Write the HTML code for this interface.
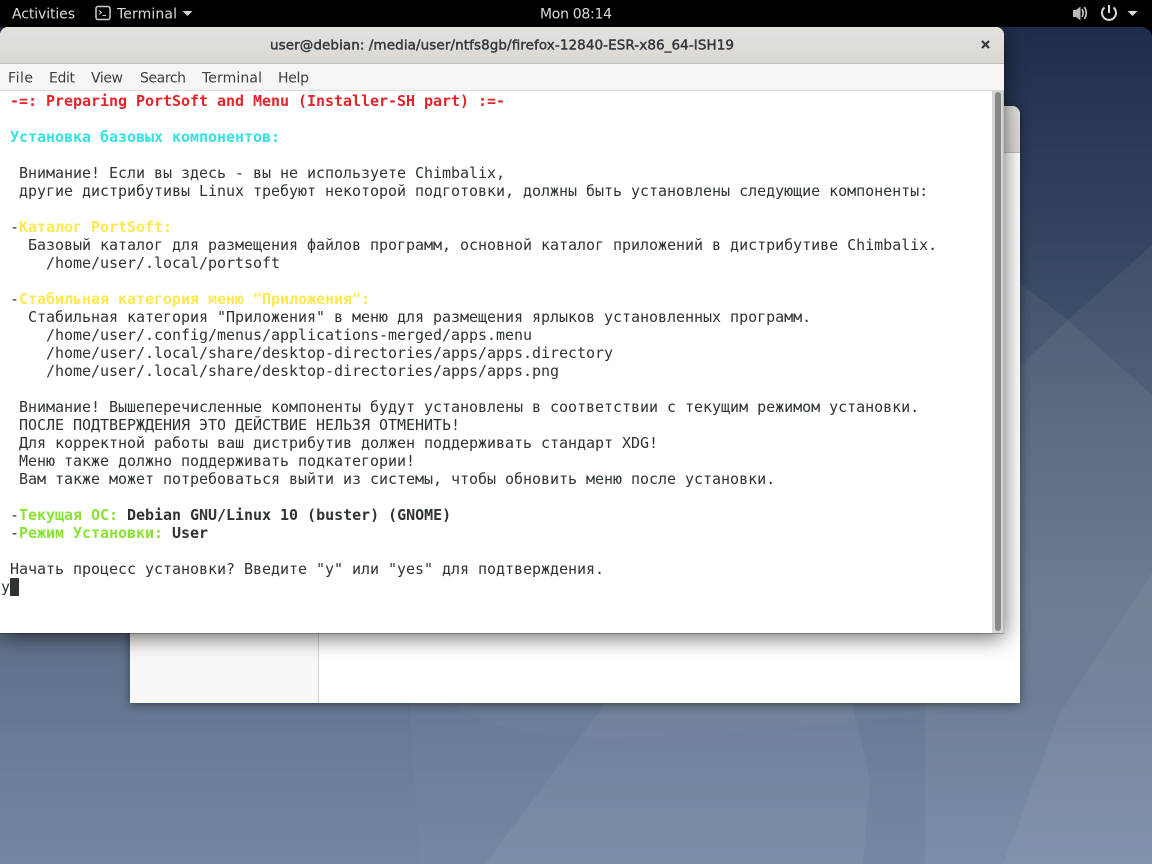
<!DOCTYPE html>
<html><head><meta charset="utf-8">
<style>
html,body{margin:0;padding:0;width:1152px;height:864px;overflow:hidden;background:#000}
#bg,#ui{position:absolute;left:0;top:0}
.win{position:absolute;box-sizing:border-box}
#back{left:130px;top:106px;width:890px;height:597px;background:#fff;border-radius:8px 8px 0 0;box-shadow:0 2px 10px rgba(0,0,0,.45);overflow:hidden}
#backhead{position:absolute;left:0;top:0;width:890px;height:46px;background:linear-gradient(#e4e2df,#dcd9d5);border-bottom:1px solid #bfbcb8}
#side{position:absolute;left:0;top:47px;width:188px;height:550px;background:#f8f8f6;border-right:1px solid #cfcfcb}
#term{left:0;top:27px;width:1004px;height:606px;border-radius:8px 8px 0 0;box-shadow:0 1px 0 rgba(0,0,0,.25),0 4px 22px rgba(0,0,0,.6);background:#f5f4f2;overflow:hidden}
#head{position:absolute;left:0;top:0;width:1004px;height:36px;background:linear-gradient(#e3e1de,#dbd8d4);border-bottom:1px solid #c2bfba}
#menu{position:absolute;left:0;top:37px;width:1004px;height:27px;background:#f6f5f3;border-bottom:1px solid #dcdad7;box-sizing:border-box}
#body{position:absolute;left:0;top:64px;width:992px;height:542px;background:#fff}
#track{position:absolute;left:992px;top:64px;width:12px;height:542px;background:#d6d6d4;box-sizing:border-box;border-right:1px solid #b8b8b6}
#thumb{position:absolute;left:995px;top:65px;width:6px;height:539px;background:#878787;border-radius:3px}
#txt{position:absolute;left:1px;top:92px;margin:0;font:15px/18px "DejaVu Sans Mono",monospace;color:#2e3436;white-space:pre;letter-spacing:-0.03px}
#txt b{font-weight:bold}
.r{color:#e3242b}.c{color:#34e2e2}.y{color:#fce94f}.g{color:#8ae234}.k{color:#2e3436}
#cur{position:absolute;left:10px;top:578px;width:9px;height:18px;background:#2e3436}
</style></head>
<body>
<svg id="bg" width="1152" height="864" viewBox="0 0 1152 864">
<defs>
<linearGradient id="g" x1="0" y1="0" x2="0" y2="1">
<stop offset="0" stop-color="#1d2a48"/><stop offset=".35" stop-color="#3b4c66"/><stop offset=".72" stop-color="#5f6f89"/><stop offset="1" stop-color="#7386a2"/>
</linearGradient>
<linearGradient id="fo" gradientUnits="userSpaceOnUse" x1="0" y1="600" x2="0" y2="703">
<stop offset="0" stop-color="#fff" stop-opacity=".055"/><stop offset="1" stop-color="#fff" stop-opacity="0"/>
</linearGradient>
<linearGradient id="fi" gradientUnits="userSpaceOnUse" x1="0" y1="600" x2="0" y2="703">
<stop offset="0" stop-color="#fff" stop-opacity="0"/><stop offset="1" stop-color="#fff" stop-opacity=".06"/>
</linearGradient>
</defs>
<rect width="1152" height="864" fill="url(#g)"/>
<path d="M1152 245L1068 320L1000 385L1000 703L1152 703Z" fill="url(#fo)"/>
<path d="M1000 268L1068 320L1152 395L1152 703L1000 703Z" fill="url(#fo)"/>
<path d="M925 703L1000 703L1000 600L1152 600L1152 864L925 864Z" fill="url(#fi)"/>
<path d="M1152 573L1060 713L1003 864L1152 864Z" fill="#fff" opacity=".05"/>
<path d="M409 703L420 864L925 864L925 703Z" fill="#fff" opacity=".02"/>
<path d="M606 703L485 864L863 864L870 780L852 703Z" fill="#fff" opacity=".05"/>
<path d="M452 703Q500 738 610 738Q760 735 955 710Q990 705 1018 703Z" fill="#fff" opacity=".025"/>
<rect x="0" y="0" width="1152" height="27" fill="#000"/>
<path d="M1140 27Q1152 27 1152 39L1152 27Z" fill="#000"/>
</svg>

<div class="win" id="back"><div id="backhead"></div><div id="side"></div></div>

<div class="win" id="term">
<div id="head"></div>
<div id="menu"></div>
<div id="body"></div>
<div id="track"></div>
<div id="thumb"></div>
</div>

<pre id="txt"><b class="r"> -=: Preparing PortSoft and Menu (Installer-SH part) :=-</b>

<b class="c"> Установка базовых компонентов:</b>

  Внимание! Если вы здесь - вы не используете Chimbalix,
  другие дистрибутивы Linux требуют некоторой подготовки, должны быть установлены следующие компоненты:

 -<b class="y">Каталог PortSoft:</b>
   Базовый каталог для размещения файлов программ, основной каталог приложений в дистрибутиве Chimbalix.
     /home/user/.local/portsoft

 -<b class="y">Стабильная категория меню "Приложения":</b>
   Стабильная категория "Приложения" в меню для размещения ярлыков установленных программ.
     /home/user/.config/menus/applications-merged/apps.menu
     /home/user/.local/share/desktop-directories/apps/apps.directory
     /home/user/.local/share/desktop-directories/apps/apps.png

  Внимание! Вышеперечисленные компоненты будут установлены в соответствии с текущим режимом установки.
  ПОСЛЕ ПОДТВЕРЖДЕНИЯ ЭТО ДЕЙСТВИЕ НЕЛЬЗЯ ОТМЕНИТЬ!
  Для корректной работы ваш дистрибутив должен поддерживать стандарт XDG!
  Меню также должно поддерживать подкатегории!
  Вам также может потребоваться выйти из системы, чтобы обновить меню после установки.

 -<b class="g">Текущая ОС:</b> <b>Debian GNU/Linux 10 (buster) (GNOME)</b>
 -<b class="g">Режим Установки:</b> <b>User</b>

 Начать процесс установки? Введите "y" или "yes" для подтверждения.
y</pre>
<div id="cur"></div>

<svg id="ui" width="1152" height="864" viewBox="0 0 1152 864" font-family="'DejaVu Sans',sans-serif">
<g fill="#dcdcda" font-size="14">
<text x="12" y="18.500" textLength="63" lengthAdjust="spacing">Activities</text>
<text x="117" y="18.500" textLength="60" lengthAdjust="spacing">Terminal</text>
<text x="540" y="18.500" textLength="72" lengthAdjust="spacing">Mon 08:14</text>
</g>
<rect x="96" y="6.500" width="14" height="13" rx="2" fill="none" stroke="#cfcfcd" stroke-width="1.500"/>
<path d="M99 10.500l2.500 2-2.500 2M102.500 15.500h3.500" fill="none" stroke="#cfcfcd" stroke-width="1"/>
<path d="M182.500 11h10l-5 5z" fill="#d6d6d4"/>
<path d="M1073 10h3l4.500-3.500v14l-4.500-3.500h-3z" fill="#b8b8b6"/>
<path d="M1082 9q2.200 4 0 8M1084.500 7q3.600 6 0 12" fill="none" stroke="#c0c0be" stroke-width="1.700"/>
<path d="M1104.500 7.500a7 7 0 1 0 9 0" fill="none" stroke="#dcdcda" stroke-width="2"/>
<path d="M1109 5v8" stroke="#dcdcda" stroke-width="2"/>
<path d="M1127.500 11h10l-5 5z" fill="#dcdcda"/>
<text x="270" y="49.500" font-size="13.500" fill="#33383a" stroke="#33383a" stroke-width=".45" textLength="464" lengthAdjust="spacing">user@debian: /media/user/ntfs8gb/firefox-12840-ESR-x86_64-ISH19</text>
<path d="M982 41l7 7M989 41l-7 7" stroke="#33383a" stroke-width="2.200"/>
<g fill="#3a3f41" font-size="14">
<text x="8" y="82.500" textLength="25" lengthAdjust="spacing">File</text>
<text x="49" y="82.500" textLength="26" lengthAdjust="spacing">Edit</text>
<text x="91" y="82.500" textLength="32" lengthAdjust="spacing">View</text>
<text x="140" y="82.500" textLength="46" lengthAdjust="spacing">Search</text>
<text x="202" y="82.500" textLength="60" lengthAdjust="spacing">Terminal</text>
<text x="278" y="82.500" textLength="31" lengthAdjust="spacing">Help</text>
</g>
</svg>
</body></html>
